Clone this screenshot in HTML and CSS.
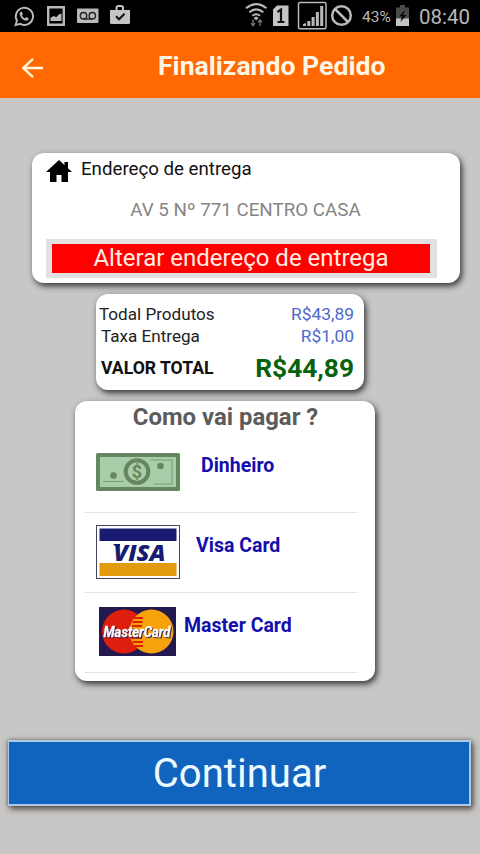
FILE: index.html
```html
<!DOCTYPE html>
<html lang="pt-BR">
<head>
<meta charset="utf-8">
<title>Finalizando Pedido</title>
<link rel="stylesheet" href="styles.css">
</head>
<body>
<div class="status">
  <svg class="status-icons" width="130" height="32" viewBox="0 0 130 32">
    <g fill="none" stroke="#b9b9b9" stroke-width="1.9"><path d="M15.6 25.2l1.3-4.7a8.6 8.6 0 1 1 3.3 3.3z"/></g>
    <path d="M21 11.700c-1.200.5-1.700 1.600-1.200 3.200 1 3.200 3.600 5.400 6.400 5.800 1.300 0 2.400-.8 2.600-2.100l-2.600-1.500-1.400 1.300c-1.300-.6-2.300-1.700-2.900-2.900l1-1.200-1-2.600z" fill="#b9b9b9"/>
    <path d="M48.200 7.200h15.600v17.600H48.200z" fill="none" stroke="#b9b9b9" stroke-width="2.400"/>
    <path d="M50.500 21v-3.200l3.200-1.700 2.600 1.200 2.600-2.800 2.600-1V21z" fill="#b9b9b9"/>
    <rect x="77" y="8.500" width="21.500" height="14.500" rx="1" fill="#b9b9b9"/>
    <g fill="none" stroke="#222" stroke-width="1.400"><circle cx="83.500" cy="15.700" r="3.200"/><circle cx="92.300" cy="15.700" r="3.200"/><path d="M83.500 19h8.800"/></g>
    <path d="M110 10h20v12.500q0 1.500-1.500 1.500h-17q-1.500 0-1.500-1.500z" fill="#c5c5c5"/>
    <path d="M116.500 10V8q0-2 2-2h2.500q2 0 2 2v2" fill="none" stroke="#c5c5c5" stroke-width="2"/>
    <path d="M116 16.300l3 3 5.600-5.600" fill="none" stroke="#111" stroke-width="2"/>
  </svg>
  <svg class="signal-icons" width="108" height="32" viewBox="245 0 108 32">
    <g fill="none" stroke="#b9b9b9" stroke-width="2"><path d="M246 8.300q10.200-8.300 20.500 0M249.300 12.200q7-5.700 14 0M252.400 15.700q3.800-3 7.700 0"/></g>
    <path d="M253.700 18l2.500-1.500 2.500 1.500-2.500 2.600z" fill="#b9b9b9"/>
    <path d="M253 19.500v6m-2-2.300 2 2.500 2-2.500M260 26v-6m-2 2.300 2-2.500 2 2.500" fill="none" stroke="#777" stroke-width="1.300"/>
    <path d="M273 9.500 277 5.500h11.500V26H273z" fill="#c5c5c5"/>
    <path d="M277.500 12l3.500-2.400V22m-3.500 0h7" fill="none" stroke="#111" stroke-width="2.200"/>
    <rect x="298.500" y="2.500" width="27.500" height="26.300" rx="1.500" fill="none" stroke="#b9b9b9" stroke-width="1.500"/>
    <path d="M303 26v-2l3-1v3zM307.300 26v-5h3v5zM311.600 26v-9h3v9zM315.900 26V12h3v14zM320.200 26V6h3v20z" fill="#b9b9b9"/>
    <g fill="none" stroke="#b9b9b9" stroke-width="2.500"><circle cx="341.500" cy="15.500" r="9.300"/><path d="M335 9l13 13"/></g>
  </svg>
  <span class="percent">43%</span>
  <svg class="battery" width="13" height="21" viewBox="0 0 13 21">
    <path d="M0 2.500h4V0h5v2.500h4V21H0z" fill="#4b4b4b"/>
    <path d="M0 13.500h13V21H0z" fill="#c5c5c5"/>
    <path d="M9 5l-6 6.500h3L4.500 17l6-7H7.300z" fill="#080808"/>
  </svg>
  <span class="clock">08:40</span>
</div>
<header class="bar">
  <svg class="back" width="24" height="24" viewBox="0 0 24 24"><path d="M23 12H3M13 2.800 3.300 12l9.700 9.200" fill="none" stroke="#fff6dc" stroke-width="2.400"/></svg>
  <h1 class="title">Finalizando Pedido</h1>
</header>
<main class="page">
  <section class="card address">
    <div class="address-head">
      <svg width="26" height="22" viewBox="0 0 26 22"><path d="M13 0 0 12h4v10h6.500v-7h5v7H22V12h4l-4-3.700V2h-3.500v3z"/></svg>
      <span class="address-label">Endereço de entrega</span>
    </div>
    <p class="address-line">AV 5 Nº 771 CENTRO CASA</p>
    <button class="change">Alterar endereço de entrega</button>
  </section>
  <section class="card totals">
    <div class="row"><span>Todal Produtos</span><span class="price">R$43,89</span></div>
    <div class="row fee"><span>Taxa Entrega</span><span class="price">R$1,00</span></div>
    <div class="row sum"><span>VALOR TOTAL</span><span class="sum-price">R$44,89</span></div>
  </section>
  <section class="card payment">
    <h2 class="question">Como vai pagar ?</h2>
    <div class="option cash">
      <svg width="84" height="38" viewBox="0 0 84 38">
        <rect width="84" height="38" rx="1.500" fill="#64875f"/><rect x="4" y="4" width="76" height="30" fill="#a9cda8"/>
        <path d="M54 7h22v24H58M7 28.500h21" fill="none" stroke="#78a076" stroke-width="1"/>
        <circle cx="41" cy="18.500" r="11.300" fill="#a9cda8" stroke="#64875f" stroke-width="4"/>
        <circle cx="17.500" cy="22.500" r="3.300" fill="#64875f"/><circle cx="64.500" cy="13" r="3.300" fill="#64875f"/>
        <text class="dollar" x="41" y="25" text-anchor="middle">$</text>
      </svg>
      <span class="name">Dinheiro</span>
    </div>
    <div class="option visa">
      <svg width="84" height="54" viewBox="0 0 84 54">
        <rect x=".5" y=".5" width="83" height="53" fill="#fff" stroke="#45455f"/>
        <rect x="3.500" y="3.500" width="77" height="12.500" fill="#181b70"/><rect x="3.500" y="38" width="77" height="13" fill="#e39a0d"/>
        <text class="visa-word" x="17.500" y="35.500" textLength="52" lengthAdjust="spacingAndGlyphs">VISA</text>
        <path d="M17 19h7v2h-5z" fill="#181b70"/>
      </svg>
      <span class="name">Visa Card</span>
    </div>
    <div class="option master">
      <svg width="77" height="49" viewBox="0 0 77 49">
        <rect width="77" height="49" fill="#24194f"/>
        <circle cx="25" cy="24.500" r="22" fill="#df1f0d"/><circle cx="52.500" cy="24.500" r="22" fill="#f6a30b"/>
        <path d="M35 11h9M33.500 15h10M33 19h10M33 31h10M34 35h10M36 39h8" stroke="#df1f0d" stroke-width="1.800"/>
        <text class="master-word" x="4.500" y="29.500" textLength="67" lengthAdjust="spacingAndGlyphs">MasterCard</text>
      </svg>
      <span class="name">Master Card</span>
    </div>
  </section>
  <button class="continue">Continuar</button>
</main>
</body>
</html>
```

FILE: styles.css
```css
* { box-sizing: border-box; }
body { margin: 0; width: 480px; height: 854px; background: #c8c7c5; font-family: Roboto, sans-serif; overflow: hidden; }
h1, h2, p { margin: 0; }
button { font-family: inherit; display: block; padding: 0; }
svg { display: block; flex: none; }
span, h1, h2, p { white-space: nowrap; }
.status { height: 32px; background: #000; display: flex; align-items: center; color: #b9b9b9; }
.signal-icons { margin-left: 115px; }
.percent { width: 30px; margin-left: 9px; font-size: 15.5px; line-height: 32px; padding-top: 1px; }
.battery { margin-left: 4px; margin-top: -2px; }
.clock { margin-left: 10px; font-size: 20.5px; padding-top: 1px; }
.bar { height: 66px; background: #ff6803; display: flex; align-items: center; }
.back { margin: 5px 0 0 20px; }
.title { margin-left: 114px; font-size: 26.6px; line-height: 64px; padding-top: 1px; font-weight: 700; color: #fff6e6; }
.page { padding-top: 55px; }
.card { background: #fff; border-radius: 12px; box-shadow: 2px 3px 6px #333; }
.address { width: 428px; height: 130px; margin-left: 32px; padding: 5px 0 0 14px; }
.address-head { display: flex; align-items: center; height: 23px; color: #111; font-size: 18.7px; }
.address-head svg { margin-top: 2px; }
.address-label { margin: 0 0 1px 9px; }
.address-line { margin: 17px 15px 0 0; line-height: 24px; font-size: 18.8px; text-align: center; color: #858585; }
.change { width: 391px; height: 39px; margin-top: 17px; border: 5px solid #e2e0e0; border-left-width: 6px; border-right-width: 7px; background: #f00; color: #ffede4; font-size: 24px; line-height: 28px; padding-bottom: 1px; }
.totals { width: 268px; height: 96px; margin: 11px 0 0 96px; padding: 9px 10px 0 3px; }
.row { display: flex; justify-content: space-between; align-items: center; height: 22px; font-size: 17.1px; color: #222; }
.row span { line-height: 20px; }
.fee { padding-left: 2px; height: 21px; }
.price { color: #4c69cc; font-size: 17.4px; }
.sum { height: 43px; padding-left: 2px; font-weight: 700; color: #111; font-size: 17.6px; }
.sum-price { font-size: 26.3px; color: #07620b; }
.payment { width: 300px; height: 280px; margin: 11px 0 0 75px; padding: 0 18px 0 9px; }
.question { height: 31px; line-height: 33px; padding-left: 10px; text-align: center; font-size: 23.9px; color: #5c5c5c; }
.option { height: 80px; border-bottom: 1px solid #e3e3e3; display: flex; align-items: flex-start; padding: 12px 0 0 12px; }
.cash { height: 81px; padding-top: 21px; }
.master { padding: 14px 0 0 15px; }
.name { font-size: 19.5px; line-height: 24px; font-weight: 700; color: #130fac; }
.cash .name { margin: 1px 0 0 21px; }
.visa .name { margin: 9px 0 0 16px; }
.master .name { margin: 7px 0 0 8px; }
.dollar { font-size: 18px; font-weight: 700; fill: #64875f; }
.visa-word { font: italic 800 23px "Open Sans", sans-serif; fill: #181b70; }
.master-word { font: italic 700 14.5px Roboto, sans-serif; fill: #fff; stroke: #fff; stroke-width: .3px; filter: drop-shadow(1px 1px 0 #39204a); }
.continue { width: 463px; height: 66px; margin: 59px 0 0 8px; border: 2px solid #aec8e5; border-left-width: 1px; background: #1064bd; box-shadow: 2px 3px 6px #554d49, 0 0 4px #776e6a; color: #edfaff; font-size: 40.1px; line-height: 60px; padding: 2px 0 0 1px; }
```
